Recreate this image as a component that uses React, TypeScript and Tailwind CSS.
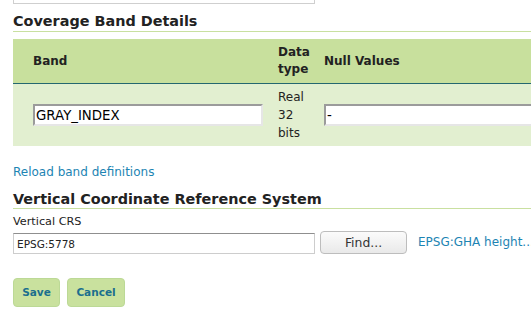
import React from "react";

export default function App() {
  return (
    <div className="w-[531px] h-[325px] overflow-hidden bg-white font-['DejaVu_Sans',sans-serif] text-[#222]">
      <div className="pl-[13px] w-[580px]">
        <div className="-mt-[18px] h-[22px] w-[302px] border border-[#cfcfcf] bg-white" />

        <h2 className="mt-[9px] text-[14.4px] font-bold leading-[17px] pb-[1px] border-b border-[#c9e0a0]">
          Coverage Band Details
        </h2>

        <div className="mt-[7px] w-[567px]">
          <div className="grid grid-cols-[258px_53px_1fr] bg-[#c8e09d] h-[44px] items-center border-b border-[#24676f] box-content text-[12px] font-bold leading-[17px]">
            <div className="pl-[20px]">Band</div>
            <div className="pl-[7px]">
              Data
              <br />
              type
            </div>
            <div>Null Values</div>
          </div>
          <div className="grid grid-cols-[258px_53px_1fr] bg-[#e2efd0] h-[62px] items-center text-[12px] leading-[18px]">
            <div className="pl-[20px]">
              <input
                readOnly
                value="GRAY_INDEX"
                className="block w-[230px] h-[22px] bg-white border-2 border-t-[#9b9b9b] border-l-[#9b9b9b] border-r-[#e6e6e6] border-b-[#e6e6e6] px-[1px] text-[13.33px] text-black outline-none"
              />
            </div>
            <div className="pl-[7px]">
              Real
              <br />
              32
              <br />
              bits
            </div>
            <div>
              <input
                readOnly
                value="-"
                className="block w-[243px] h-[22px] bg-white border-2 border-t-[#9b9b9b] border-l-[#9b9b9b] border-r-[#e6e6e6] border-b-[#e6e6e6] px-[1px] text-[13.33px] text-black outline-none"
              />
            </div>
          </div>
        </div>

        <div className="mt-[18px] text-[12px] leading-[16px]">
          <a className="text-[#1d84b3] cursor-pointer">Reload band definitions</a>
        </div>

        <h2 className="mt-[11px] text-[14.4px] font-bold leading-[17px] border-b border-[#c9e0a0]">
          Vertical Coordinate Reference System
        </h2>

        <div className="mt-[6px] text-[11.25px] leading-[14px]">Vertical CRS</div>

        <div className="mt-[2px] flex items-start">
          <input
            readOnly
            value="EPSG:5778"
            className="mt-[2px] block w-[302px] h-[21px] bg-white border border-[#cdcdcd] border-t-[#8f8f8f] px-[3px] text-[10.5px] text-[#222] outline-none"
          />
          <button className="ml-[5px] w-[87px] h-[23px] rounded-[4px] border border-[#bdbdbd] bg-gradient-to-b from-[#fbfbfb] to-[#e9e9e9] text-[12.4px] text-[#333] leading-[20px]">
            Find...
          </button>
          <a className="ml-[11px] text-[12px] leading-[23px] text-[#1d84b3] whitespace-nowrap cursor-pointer">
            EPSG:GHA height...
          </a>
        </div>

        <div className="mt-[24px] flex gap-[7px]">
          <button className="w-[47px] h-[29px] rounded-[4px] border border-[#bcd996] bg-[#c9e19e] text-[10.5px] font-bold text-[#1b6f8e]">
            Save
          </button>
          <button className="w-[58px] h-[29px] rounded-[4px] border border-[#bcd996] bg-[#c9e19e] text-[10.5px] font-bold text-[#1b6f8e]">
            Cancel
          </button>
        </div>
      </div>
    </div>
  );
}
